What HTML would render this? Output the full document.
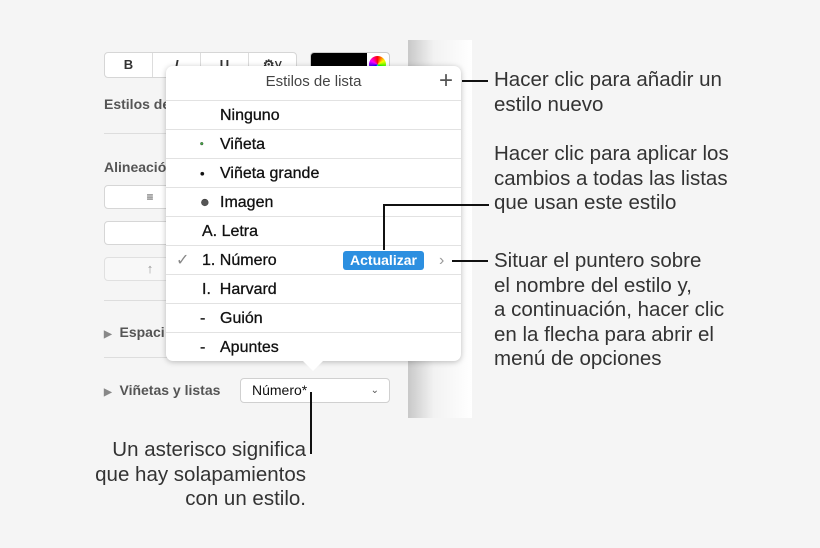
<!DOCTYPE html>
<html><head><meta charset="utf-8"><style>
body{margin:0;width:820px;height:548px;background:#f5f5f5;font-family:"Liberation Sans",sans-serif;position:relative;overflow:hidden}
.a{position:absolute}
.strip{left:408px;top:40px;width:64px;height:378px;background:linear-gradient(90deg,#c8c8c8,#f2f2f2 40%,#fff)}
.seg{top:52px;left:104px;width:191px;height:24px;border:1px solid #d6d6d6;border-radius:4px;background:#fff;display:flex}
.seg div{flex:1;border-right:1px solid #ddd;text-align:center;font-size:13px;font-weight:bold;line-height:24px;color:#333}
.lbl{font-size:14px;font-weight:bold;color:#555}
.hr{height:1px;background:#ddd;left:104px;width:286px}
.pop{left:166px;top:66px;width:295px;height:295px;background:#fff;border-radius:7px;box-shadow:0 1px 6px rgba(0,0,0,.25)}
.row{position:absolute;left:0;width:295px;height:29px;border-top:1px solid #e2e2e2;font-size:16px;color:#111;line-height:29px;-webkit-text-stroke:0.3px #111}
.row .m{position:absolute;left:34px;width:18px;text-align:left}
.row .t{position:absolute;left:54px}
.ann{font-size:20.5px;color:#333;line-height:24.5px}
.ln{background:#111}
</style></head><body>
<div class="a strip"></div>
<div class="a seg"><div>B</div><div style="font-style:italic">I</div><div style="text-decoration:underline">U</div><div style="border:0">⚙︎˅</div></div>
<div class="a" style="left:310px;top:52px;width:78px;height:24px;border:1px solid #ccc;border-radius:4px;background:#fff"><div style="width:56px;height:24px;background:#000;border-radius:3px 0 0 3px"></div><div class="a" style="left:58px;top:3px;width:17px;height:17px;border-radius:50%;background:conic-gradient(red,yellow,lime,cyan,blue,magenta,red)"></div></div>
<div class="a lbl" style="left:104px;top:96px">Estilos de</div>
<div class="a hr" style="top:133px"></div>
<div class="a lbl" style="left:104px;top:159px">Alineació</div>
<div class="a" style="left:104px;top:185px;width:90px;height:22px;border:1px solid #d6d6d6;border-radius:4px;background:#fff;text-align:center;font-size:12px;line-height:22px;color:#444">≡</div>
<div class="a" style="left:104px;top:221px;width:90px;height:22px;border:1px solid #d6d6d6;border-radius:4px;background:#fff"></div>
<div class="a" style="left:104px;top:257px;width:90px;height:22px;border:1px solid #e0e0e0;border-radius:4px;background:#f8f8f8;text-align:center;font-size:13px;line-height:22px;color:#999">↑</div>
<div class="a hr" style="top:300px"></div>
<div class="a lbl" style="left:104px;top:324px"><span style="font-size:10px;color:#888">▶</span>&nbsp; Espaci</div>
<div class="a hr" style="top:357px"></div>
<div class="a lbl" style="left:104px;top:382px"><span style="font-size:10px;color:#888">▶</span>&nbsp; Viñetas y listas</div>
<div class="a" style="left:240px;top:378px;width:148px;height:23px;border:1px solid #d0d0d0;border-radius:4px;background:#fff;font-size:14px;line-height:23px"><span style="margin-left:11px;color:#111">Número*</span><span class="a" style="right:10px;top:0;font-size:10px;color:#555">⌄</span></div>
<div class="a pop">
<div style="position:absolute;left:0;width:295px;top:7px;text-align:center;font-size:15px;color:#444">Estilos de lista</div>
<div style="position:absolute;right:8px;top:1px;font-size:24px;color:#555">+</div>
<div class="row" style="top:34px"><span class="t">Ninguno</span></div>
<div class="row" style="top:63px"><span class="m" style="color:#4a4;font-size:10px">•</span><span class="t">Viñeta</span></div>
<div class="row" style="top:92px"><span class="m" style="font-size:13px">•</span><span class="t">Viñeta grande</span></div>
<div class="row" style="top:121px"><span class="m" style="color:#555">●</span><span class="t">Imagen</span></div>
<div class="row" style="top:150px"><span class="t" style="left:36px">A. Letra</span></div>
<div class="row" style="top:179px"><span class="a" style="left:10px;color:#888;-webkit-text-stroke:0">✓</span><span class="t" style="left:36px">1. Número</span><span class="a" style="left:177px;top:5px;width:81px;height:19px;background:#2c8fe0;border-radius:3px;color:#fff;font-size:14px;font-weight:bold;line-height:19px;text-align:center;-webkit-text-stroke:0">Actualizar</span><span class="a" style="left:273px;color:#999;-webkit-text-stroke:0">›</span></div>
<div class="row" style="top:208px"><span class="t" style="left:36px">I.&nbsp;&nbsp;Harvard</span></div>
<div class="row" style="top:237px"><span class="m">-</span><span class="t">Guión</span></div>
<div class="row" style="top:266px"><span class="m">-</span><span class="t">Apuntes</span></div>
</div>
<div class="a" style="left:302px;top:360px;width:0;height:0;border-left:11px solid transparent;border-right:11px solid transparent;border-top:11px solid #fff"></div>
<div class="a ln" style="left:462px;top:80px;width:26px;height:2px"></div>
<div class="a ann" style="left:494px;top:68px">Hacer clic para añadir un<br>estilo nuevo</div>
<div class="a ann" style="left:494px;top:142px">Hacer clic para aplicar los<br>cambios a todas las listas<br>que usan este estilo</div>
<div class="a ln" style="left:383px;top:204px;width:106px;height:2px"></div>
<div class="a ln" style="left:383px;top:204px;width:2px;height:46px"></div>
<div class="a ln" style="left:452px;top:260px;width:36px;height:2px"></div>
<div class="a ann" style="left:494px;top:249px">Situar el puntero sobre<br>el nombre del estilo y,<br>a continuación, hacer clic<br>en la flecha para abrir el<br>menú de opciones</div>
<div class="a ln" style="left:310px;top:392px;width:2px;height:62px"></div>
<div class="a ann" style="left:30px;top:438px;width:276px;text-align:right">Un asterisco significa<br>que hay solapamientos<br>con un estilo.</div>
</body></html>
